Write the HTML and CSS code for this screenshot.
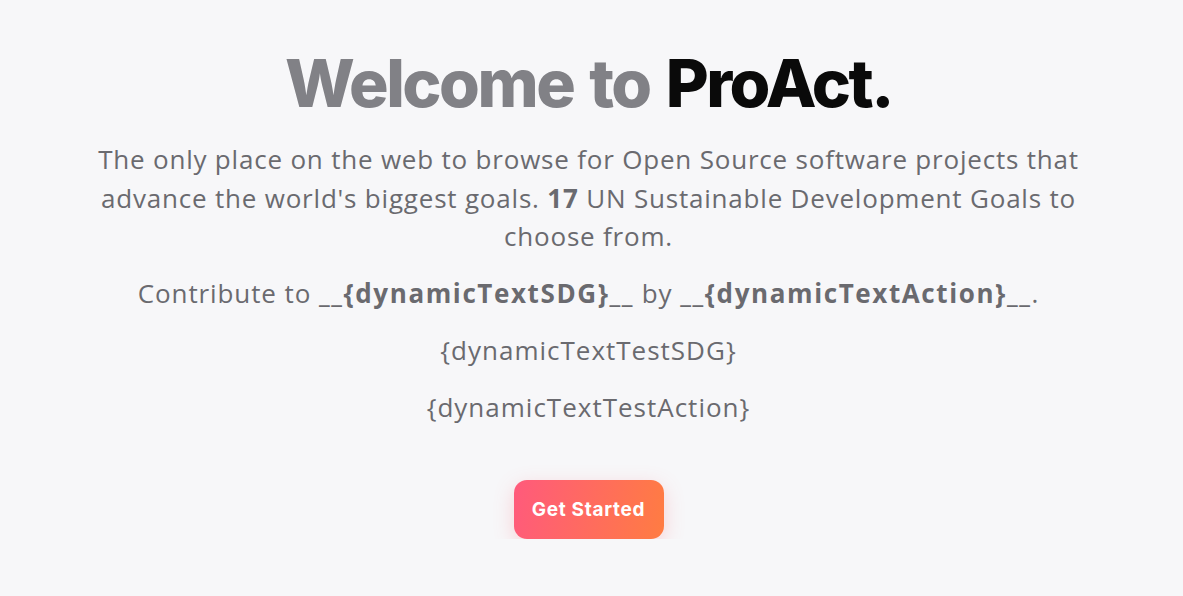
FILE: index.html
```html
<!DOCTYPE html>
<html lang="en">
<head>
<meta charset="utf-8">
<title>ProAct</title>
<link rel="stylesheet" href="styles.css">
</head>
<body>
<main class="hero">
  <h1 class="title"><span class="muted">Welcome to</span> <span class="brand">ProAct.</span></h1>
  <p class="lead">The only place on the web to browse for Open Source software projects that advance the world's biggest goals. <strong>17</strong> UN Sustainable Development Goals to choose from.</p>
  <p class="contrib">Contribute to <strong>__{dynamicTextSDG}__</strong> by <strong>__{dynamicTextAction}__</strong>.</p>
  <p class="dyn">{dynamicTextTestSDG}</p>
  <p class="dyn">{dynamicTextTestAction}</p>
  <a class="cta" href="#">Get Started</a>
</main>
</body>
</html>
```
FILE: styles.css
```css
html, body {
  margin: 0;
  padding: 0;
  background: #f7f7f9;
}
body {
  font-family: "Open Sans", "Inter", sans-serif;
  color: #6a6a6f;
}
.hero {
  display: flex;
  flex-direction: column;
  align-items: center;
  text-align: center;
  padding: 44px 6px 0 0;
}
.title {
  margin: 0;
  font-family: "Inter", sans-serif;
  font-size: 66px;
  font-weight: 800;
  letter-spacing: -2.5px;
  line-height: 1.2;
  word-spacing: 4px;
}
.title .muted { color: #818186; }
.title .brand { color: #0a0a0a; }
.lead {
  margin: 17px 0 0;
  max-width: 1010px;
  font-size: 26px;
  line-height: 38.5px;
  letter-spacing: 0.8px;
}
.lead strong { font-weight: 700; }
.contrib {
  margin: 18px 0 0;
  font-size: 26px;
  line-height: 38px;
  letter-spacing: 0.9px;
}
.contrib strong {
  font-weight: 700;
  letter-spacing: 1.6px;
}
.dyn {
  margin: 19px 0 0;
  font-size: 26px;
  line-height: 38px;
  letter-spacing: 1px;
}
.cta {
  margin-top: 54px;
  display: inline-flex;
  align-items: center;
  justify-content: center;
  width: 150px;
  height: 59px;
  border-radius: 13px;
  background: linear-gradient(100deg, #ff5a7c 0%, #ff7c42 100%);
  color: #fff;
  font-family: "Inter", sans-serif;
  font-weight: 700;
  font-size: 19px;
  letter-spacing: 0.7px;
  text-decoration: none;
  box-shadow: 0 6px 20px rgba(255, 100, 110, 0.25);
}
```
